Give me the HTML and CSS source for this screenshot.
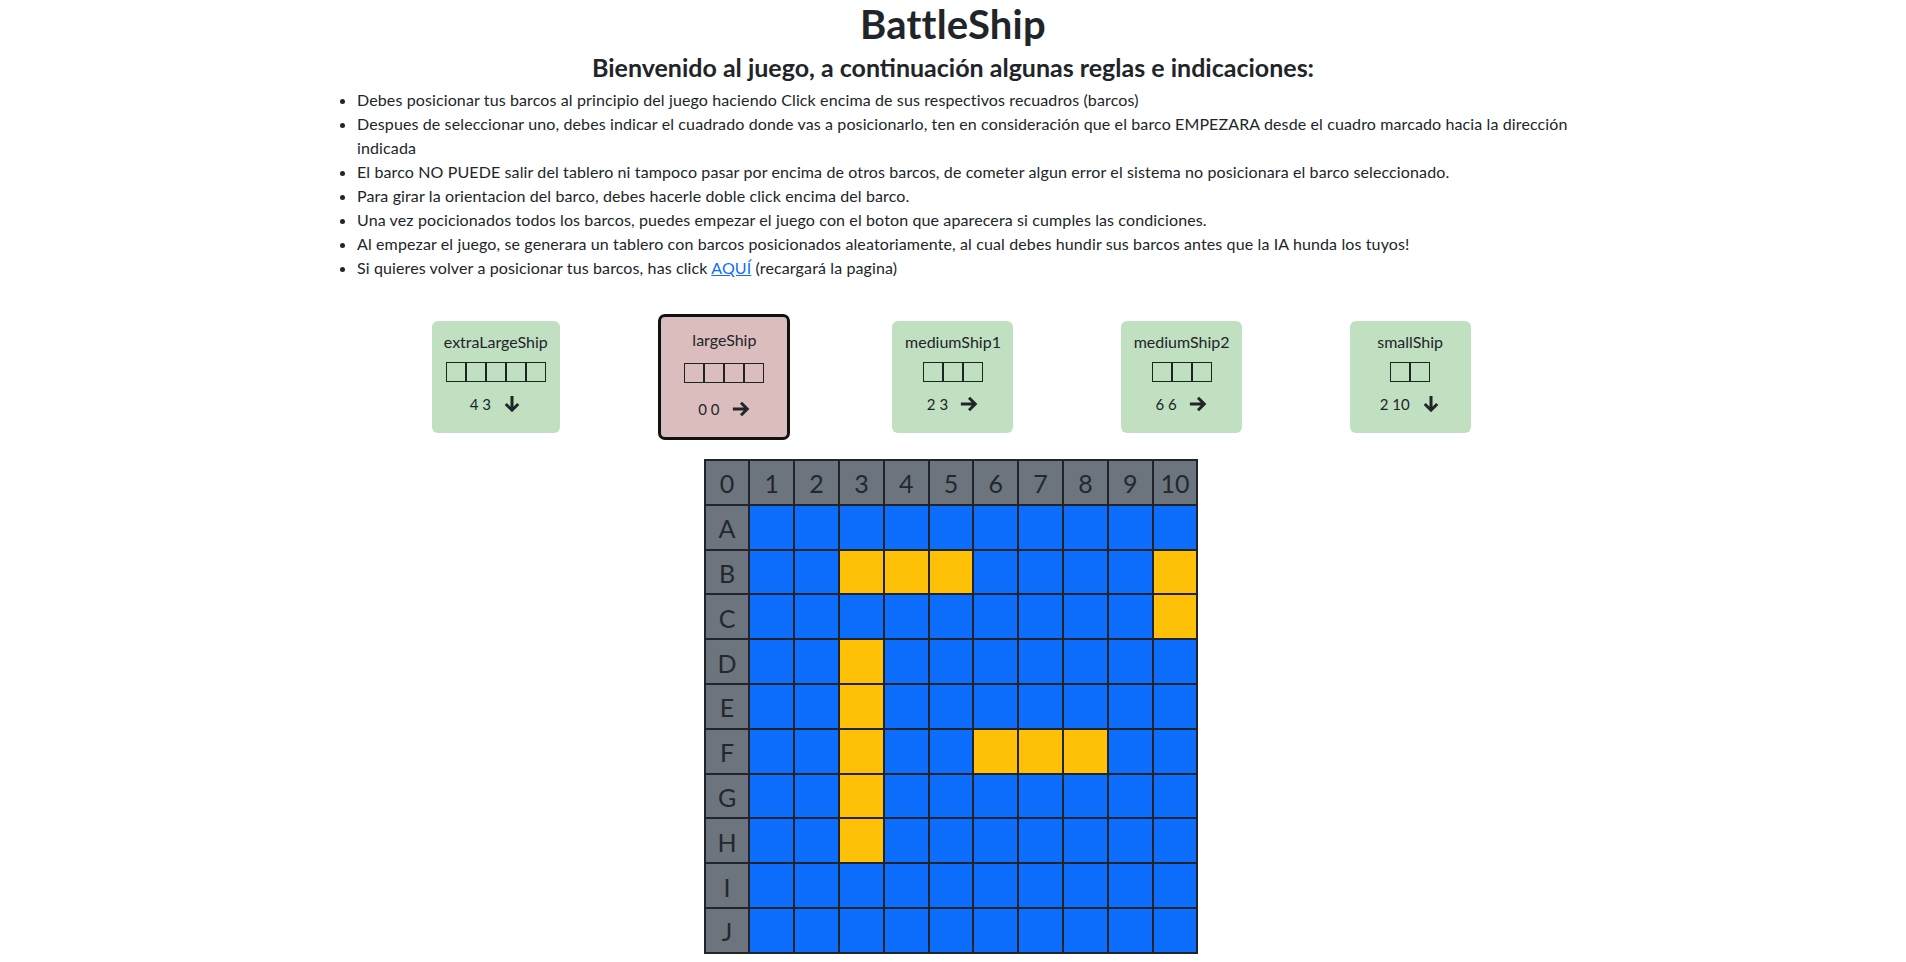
FILE: index.html
```html
<!DOCTYPE html>
<html lang="es">
<head>
<meta charset="utf-8">
<title>BattleShip</title>
<link rel="stylesheet" href="styles.css">
</head>
<body>
<main class="page">
  <h1 class="title">BattleShip</h1>
  <h4 class="subtitle">Bienvenido al juego, a continuación algunas reglas e indicaciones:</h4>
  <ul class="rules">
    <li>Debes posicionar tus barcos al principio del juego haciendo Click encima de sus respectivos recuadros (barcos)</li>
    <li>Despues de seleccionar uno, debes indicar el cuadrado donde vas a posicionarlo, ten en consideración que el barco EMPEZARA desde el cuadro marcado hacia la dirección indicada</li>
    <li>El barco NO PUEDE salir del tablero ni tampoco pasar por encima de otros barcos, de cometer algun error el sistema no posicionara el barco seleccionado.</li>
    <li>Para girar la orientacion del barco, debes hacerle doble click encima del barco.</li>
    <li>Una vez pocicionados todos los barcos, puedes empezar el juego con el boton que aparecera si cumples las condiciones.</li>
    <li>Al empezar el juego, se generara un tablero con barcos posicionados aleatoriamente, al cual debes hundir sus barcos antes que la IA hunda los tuyos!</li>
    <li>Si quieres volver a posicionar tus barcos, has click <a href="#">AQUÍ</a> (recargará la pagina)</li>
  </ul>

  <section class="ships">
    <div class="ship-col">
      <div class="ship-card">
        <div class="ship-name">extraLargeShip</div>
        <div class="ship-boxes"><span class="sq"></span><span class="sq"></span><span class="sq"></span><span class="sq"></span><span class="sq"></span></div>
        <div class="ship-pos"><span class="nums">4 3</span><svg class="arrow" viewBox="0 0 16 16"><path d="M8 1.5v11.5M3 8l5 5 5-5"/></svg></div>
      </div>
    </div>
    <div class="ship-col">
      <div class="ship-card selected">
        <div class="ship-name">largeShip</div>
        <div class="ship-boxes"><span class="sq"></span><span class="sq"></span><span class="sq"></span><span class="sq"></span></div>
        <div class="ship-pos"><span class="nums">0 0</span><svg class="arrow" viewBox="0 0 16 16"><path d="M1.5 8h11.5M8 3l5 5-5 5"/></svg></div>
      </div>
    </div>
    <div class="ship-col">
      <div class="ship-card">
        <div class="ship-name">mediumShip1</div>
        <div class="ship-boxes"><span class="sq"></span><span class="sq"></span><span class="sq"></span></div>
        <div class="ship-pos"><span class="nums">2 3</span><svg class="arrow" viewBox="0 0 16 16"><path d="M1.5 8h11.5M8 3l5 5-5 5"/></svg></div>
      </div>
    </div>
    <div class="ship-col">
      <div class="ship-card">
        <div class="ship-name">mediumShip2</div>
        <div class="ship-boxes"><span class="sq"></span><span class="sq"></span><span class="sq"></span></div>
        <div class="ship-pos"><span class="nums">6 6</span><svg class="arrow" viewBox="0 0 16 16"><path d="M1.5 8h11.5M8 3l5 5-5 5"/></svg></div>
      </div>
    </div>
    <div class="ship-col">
      <div class="ship-card">
        <div class="ship-name">smallShip</div>
        <div class="ship-boxes"><span class="sq"></span><span class="sq"></span></div>
        <div class="ship-pos"><span class="nums">2 10</span><svg class="arrow" viewBox="0 0 16 16"><path d="M8 1.5v11.5M3 8l5 5 5-5"/></svg></div>
      </div>
    </div>
  </section>

  <div class="board">
    <div class="hd">0</div><div class="hd">1</div><div class="hd">2</div><div class="hd">3</div><div class="hd">4</div><div class="hd">5</div><div class="hd">6</div><div class="hd">7</div><div class="hd">8</div><div class="hd">9</div><div class="hd">10</div>
    <div class="hd">A</div><div class="w"></div><div class="w"></div><div class="w"></div><div class="w"></div><div class="w"></div><div class="w"></div><div class="w"></div><div class="w"></div><div class="w"></div><div class="w"></div>
    <div class="hd">B</div><div class="w"></div><div class="w"></div><div class="s"></div><div class="s"></div><div class="s"></div><div class="w"></div><div class="w"></div><div class="w"></div><div class="w"></div><div class="s"></div>
    <div class="hd">C</div><div class="w"></div><div class="w"></div><div class="w"></div><div class="w"></div><div class="w"></div><div class="w"></div><div class="w"></div><div class="w"></div><div class="w"></div><div class="s"></div>
    <div class="hd">D</div><div class="w"></div><div class="w"></div><div class="s"></div><div class="w"></div><div class="w"></div><div class="w"></div><div class="w"></div><div class="w"></div><div class="w"></div><div class="w"></div>
    <div class="hd">E</div><div class="w"></div><div class="w"></div><div class="s"></div><div class="w"></div><div class="w"></div><div class="w"></div><div class="w"></div><div class="w"></div><div class="w"></div><div class="w"></div>
    <div class="hd">F</div><div class="w"></div><div class="w"></div><div class="s"></div><div class="w"></div><div class="w"></div><div class="s"></div><div class="s"></div><div class="s"></div><div class="w"></div><div class="w"></div>
    <div class="hd">G</div><div class="w"></div><div class="w"></div><div class="s"></div><div class="w"></div><div class="w"></div><div class="w"></div><div class="w"></div><div class="w"></div><div class="w"></div><div class="w"></div>
    <div class="hd">H</div><div class="w"></div><div class="w"></div><div class="s"></div><div class="w"></div><div class="w"></div><div class="w"></div><div class="w"></div><div class="w"></div><div class="w"></div><div class="w"></div>
    <div class="hd">I</div><div class="w"></div><div class="w"></div><div class="w"></div><div class="w"></div><div class="w"></div><div class="w"></div><div class="w"></div><div class="w"></div><div class="w"></div><div class="w"></div>
    <div class="hd">J</div><div class="w"></div><div class="w"></div><div class="w"></div><div class="w"></div><div class="w"></div><div class="w"></div><div class="w"></div><div class="w"></div><div class="w"></div><div class="w"></div>
  </div>
</main>
</body>
</html>
```

FILE: styles.css
```css
* { box-sizing: border-box; }

body {
  margin: 0;
  font-family: "Segoe UI", Lato, "Noto Sans", sans-serif;
  font-size: 16px;
  line-height: 1.5;
  color: #212529;
  background: #fff;
}

.page {
  display: flex;
  flex-direction: column;
  align-items: center;
}

.title {
  margin: 0;
  font-size: 40px;
  font-weight: 700;
  line-height: 48px;
  letter-spacing: 0.2px;
  text-align: center;
}

.subtitle {
  margin: 5px 0 0;
  font-size: 25px;
  font-weight: 700;
  line-height: 29px;
  text-align: center;
}

.rules {
  width: 1256px;
  margin: 6px 0 0;
  padding-left: 32px;
  line-height: 24px;
  font-size: 16px;
  letter-spacing: 0.12px;
}

.rules a {
  color: #0d6efd;
  text-decoration: underline;
}

.ships {
  width: 1143px;
  margin-top: 34px;
  display: flex;
  align-items: center;
}

.ship-col {
  flex: 1 1 0;
  display: flex;
  justify-content: center;
}

.ship-card {
  min-width: 121px;
  height: 112px;
  padding: 9px 12px 12px;
  background: #c0e0c1;
  border-radius: 6px;
  display: flex;
  flex-direction: column;
  align-items: center;
}

.ship-card.selected {
  width: 132px;
  height: 126px;
  background: #dcbdbd;
  border: 3px solid #111;
  border-radius: 7px;
  padding: 11px 12px 9px;
}

.ship-name {
  line-height: 24px;
  font-size: 16px;
  white-space: nowrap;
}

.ship-boxes {
  display: flex;
  margin-top: 8px;
}

.selected .ship-boxes { margin-top: 11px; }

.sq {
  width: 20px;
  height: 20px;
  border: 1px solid #1c2620;
}

.ship-pos {
  margin-top: 10px;
  height: 24px;
  display: flex;
  align-items: center;
  justify-content: center;
}

.selected .ship-pos { margin-top: 14px; }

.nums {
  font-size: 15px;
  line-height: 24px;
}

.arrow {
  width: 20px;
  height: 20px;
  margin-left: 11px;
  fill: none;
  stroke: #212529;
  stroke-width: 2.4;
  stroke-linecap: butt;
  stroke-linejoin: miter;
}

.board {
  margin-top: 19px;
  margin-right: 4px;
  display: grid;
  grid-template-columns: repeat(11, 42.8px);
  grid-auto-rows: 42.8px;
  gap: 2px;
  padding: 2px;
  background: #212529;
}

.board > div {
  display: flex;
  align-items: center;
  justify-content: center;
}

.hd {
  background: #6c757d;
  color: #23282d;
  font-size: 25px;
  line-height: 1;
  padding-top: 3px;
}

.w { background: #0d6efd; }
.s { background: #ffc107; }
```
